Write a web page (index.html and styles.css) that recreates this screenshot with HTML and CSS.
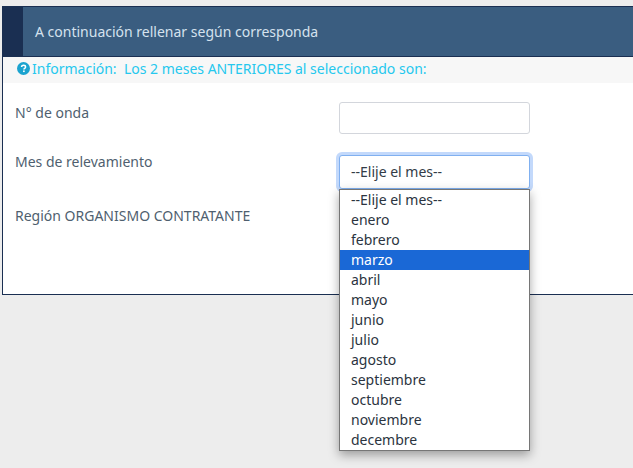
FILE: index.html
```html
<!DOCTYPE html>
<html lang="en">
<head>
    <meta charset="UTF-8">
    <meta name="viewport" content="width=device-width, initial-scale=1.0">
    <title>Relevamiento</title>
    <link rel="stylesheet" href="styles.css">
</head>
<body>
    <div class="panel">
        <div class="panel-heading">
            <div class="heading-mark"></div>
            <h2>A continuación rellenar según corresponda</h2>
        </div>
        <div class="info-row">
            <svg class="info-icon" viewBox="0 0 12 12" aria-hidden="true">
                <circle cx="6" cy="6" r="6" fill="#1ba3cf"/>
                <path d="M4.2 4.7c0-1.2.9-1.8 1.9-1.8s1.8.6 1.8 1.6c0 1.3-1.5 1.3-1.5 2.4" fill="none" stroke="#fff" stroke-width="1.4"/>
                <rect x="5.6" y="7.8" width="1.5" height="1.5" fill="#fff"/>
            </svg>
            <span>Información:&nbsp; Los 2 meses ANTERIORES al seleccionado son:</span>
        </div>
        <form class="form-body">
            <div class="form-group">
                <label for="onda">N° de onda</label>
                <input type="text" id="onda" name="onda">
            </div>
            <div class="form-group">
                <label for="mes">Mes de relevamiento</label>
                <div class="select-wrap">
                    <div class="select-box" id="mes">--Elije el mes--</div>
                    <ul class="select-list">
                        <li>--Elije el mes--</li>
                        <li>enero</li>
                        <li>febrero</li>
                        <li class="selected">marzo</li>
                        <li>abril</li>
                        <li>mayo</li>
                        <li>junio</li>
                        <li>julio</li>
                        <li>agosto</li>
                        <li>septiembre</li>
                        <li>octubre</li>
                        <li>noviembre</li>
                        <li>decembre</li>
                    </ul>
                </div>
            </div>
            <div class="form-group">
                <label>Región ORGANISMO CONTRATANTE</label>
            </div>
        </form>
    </div>
</body>
</html>
```

FILE: styles.css
```css
body {
    font-family: "Noto Sans", sans-serif;
    font-size: 14px;
    margin: 0;
    height: 468px;
    overflow: hidden;
    background-color: #ededed;
    color: #4f5f6f;
}

.panel {
    margin: 6px -20px 0 2px;
    height: 287px;
    background-color: white;
    border: 1px solid #1a2f52;
}

.panel-heading {
    display: flex;
    align-items: center;
    height: 49px;
    background-color: #3a5d80;
    border-bottom: 1px solid #1a2f52;
}

.heading-mark {
    width: 20px;
    height: 100%;
    background-color: #1a2f52;
}

.panel-heading h2 {
    margin: 0 0 0 12px;
    font-size: 14px;
    font-weight: normal;
    color: #d5e2ee;
}

.info-row {
    display: flex;
    align-items: center;
    gap: 2px;
    height: 26px;
    padding: 0 0 4px 14px;
    box-sizing: border-box;
    background-color: #f7f7f7;
    color: #25c8ee;
}

.info-icon {
    width: 13px;
    height: 13px;
}

.form-body {
    padding-top: 19px;
}

.form-group {
    display: flex;
    margin-bottom: 17px;
    padding-left: 12px;
}

.form-group label {
    width: 324px;
    padding-top: 1px;
    line-height: 20px;
}

.form-group input {
    width: 191px;
    height: 32px;
    margin: 0;
    padding: 0;
    box-sizing: border-box;
    background-color: white;
    border: 1px solid #d3d6dc;
    border-radius: 3px;
}

.select-wrap {
    position: relative;
    width: 191px;
    margin-top: 4px;
    margin-bottom: -1px;
}

.select-box {
    height: 34px;
    box-sizing: border-box;
    padding: 0 11px;
    line-height: 32px;
    color: #333c47;
    background-color: white;
    border: 1px solid #80b0f0;
    border-radius: 3px;
    box-shadow: 0 0 0 3px #c3d9fb;
}

.select-list {
    position: absolute;
    top: 34px;
    left: 0;
    width: 191px;
    box-sizing: border-box;
    margin: 0;
    padding: 0;
    list-style: none;
    color: #2b3440;
    background-color: white;
    border: 1px solid #767676;
    box-shadow: 0 4px 10px rgba(0, 0, 0, 0.35);
}

.select-list li {
    height: 20px;
    padding: 0 11px;
    line-height: 20px;
}

.select-list .selected {
    background-color: #1a68d6;
    color: white;
}
```
